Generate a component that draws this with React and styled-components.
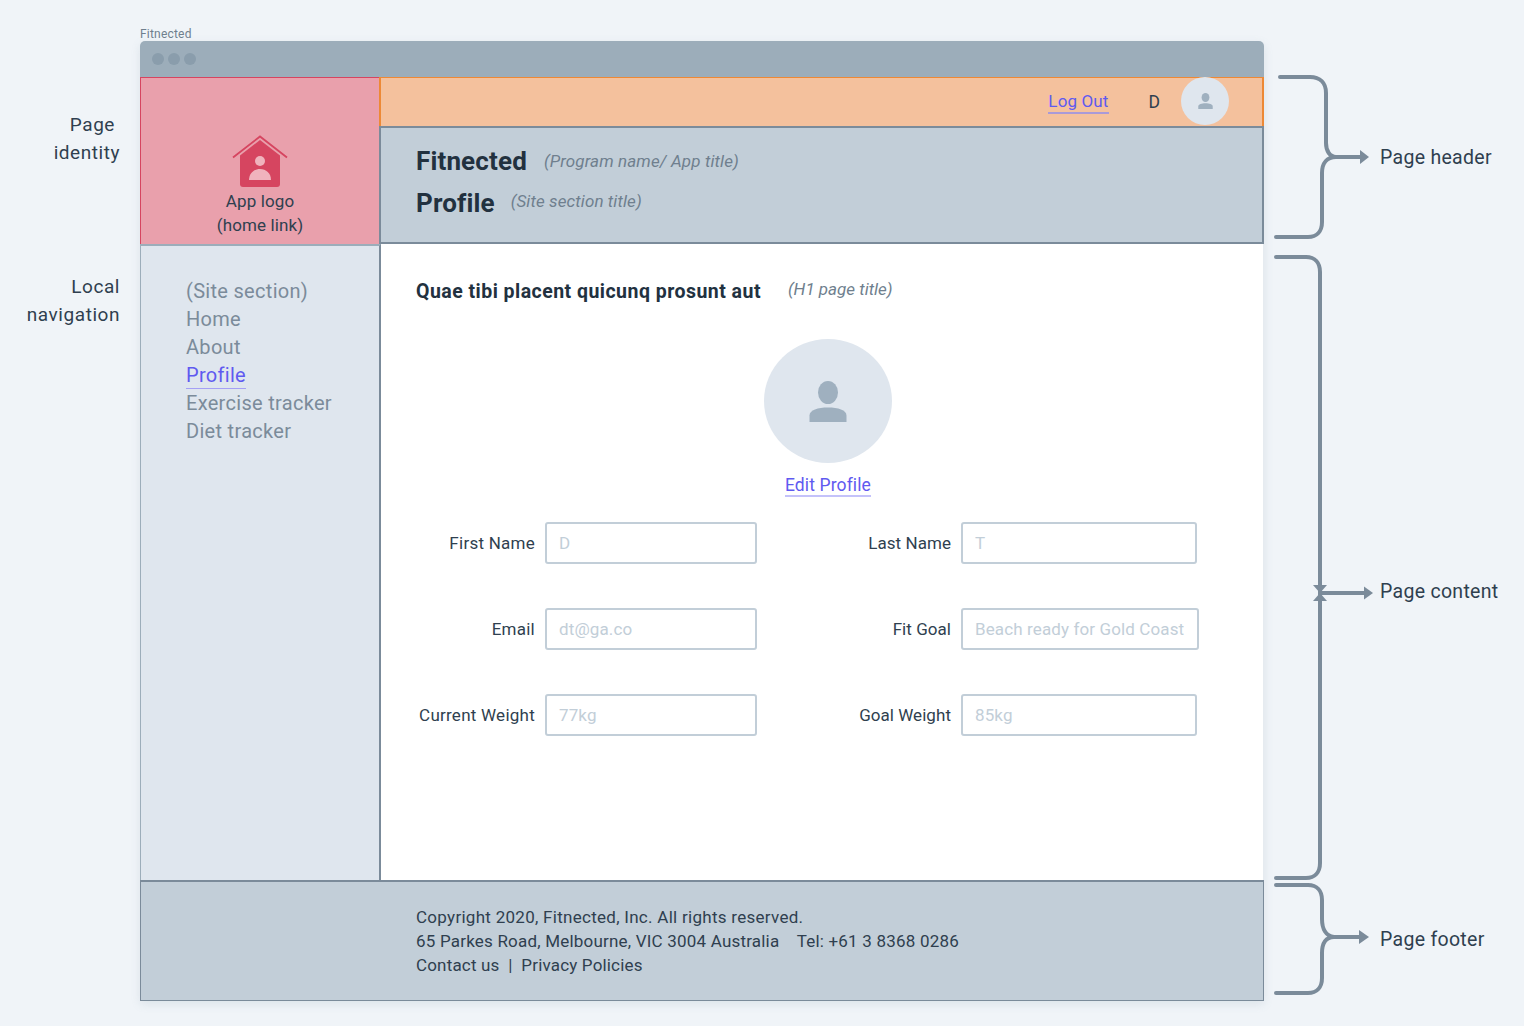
import React from "react";
import styled, { createGlobalStyle } from "styled-components";

const Global = createGlobalStyle`
  html, body { margin: 0; padding: 0; background: #f0f4f8; }
  body { font-family: Roboto, "Liberation Sans", sans-serif; color: #2f3f4f; overflow: hidden; }
  * { box-sizing: border-box; }
`;

const Page = styled.div`
  display: grid;
  grid-template-columns: 140px 1124px 1fr;
  grid-template-rows: 14px 960px;
  width: 1524px;
  height: 1026px;
  padding-top: 27px;
  background: #f0f4f8;
`;
const Caption = styled.div`
  grid-column: 2;
  font-size: 12px;
  line-height: 14px;
  color: #6f7f8e;
  letter-spacing: 0.2px;
`;
const LeftNotes = styled.div`
  grid-column: 1;
  grid-row: 2;
  display: flex;
  flex-direction: column;
  gap: 106px;
  padding: 70px 20px 0 0;
`;
const Note = styled.div`
  font-size: 19px;
  line-height: 28px;
  letter-spacing: 0.55px;
  text-align: right;
  color: #2f3f4f;
  white-space: nowrap;
`;
const NoteIndent = styled.span`
  display: block;
  padding-right: 5px;
`;
const Window = styled.div`
  grid-column: 2;
  grid-row: 2;
  display: flex;
  flex-direction: column;
  border-radius: 5px 5px 0 0;
  overflow: hidden;
  box-shadow: 0 3px 10px rgba(120, 140, 160, 0.16);
`;
const TitleBar = styled.div`
  flex: 0 0 36px;
  display: flex;
  align-items: center;
  gap: 4px;
  padding: 0 0 0 12px;
  background: #9cadba;
`;
const Dot = styled.span`
  width: 12px;
  height: 12px;
  border-radius: 50%;
  background: #8a9dac;
`;
const HeaderRow = styled.div`
  flex: 0 0 167px;
  display: flex;
`;
const Identity = styled.a`
  flex: 0 0 239px;
  display: flex;
  flex-direction: column;
  align-items: center;
  padding-top: 57px;
  background: #e9a0ac;
  border-top: 1px solid #d64560;
  border-left: 1px solid #d64560;
  font-size: 17px;
  line-height: 24px;
  letter-spacing: 0.12px;
  color: #2f3f4f;
  text-align: center;
`;
const Logo = styled.svg`
  display: block;
  margin-bottom: 1px;
`;
const HeaderStack = styled.div`
  flex: 1;
  display: flex;
  flex-direction: column;
  min-width: 0;
`;
const TopBar = styled.div`
  flex: 0 0 49px;
  display: flex;
  align-items: center;
  justify-content: flex-end;
  padding-right: 33px;
  background: #f4c19d;
  border-top: 1px solid #ed8936;
  border-left: 2px solid #ed8936;
  border-right: 2px solid #ed8936;
`;
const TopLink = styled.a`
  font-size: 17px;
  line-height: 22px;
  letter-spacing: 0.13px;
  color: #5f5af0;
  border-bottom: 2px solid #a99ad8;
  margin-right: 40px;
`;
const UserInitial = styled.span`
  font-size: 17.5px;
  color: #2f3f4f;
  margin-right: 21px;
`;
const AvatarSmall = styled.div`
  width: 48px;
  height: 48px;
  margin-top: -2px;
  border-radius: 50%;
  background: #dfe6ee;
  display: flex;
  align-items: center;
  justify-content: center;
`;
const TitlePanel = styled.div`
  flex: 1;
  display: flex;
  flex-direction: column;
  gap: 12px;
  padding: 18px 0 0 35px;
  background: #c2ced8;
  border: 2px solid #7b8b9a;
`;
const TitleLine = styled.div`
  display: flex;
  align-items: center;
  gap: ${(p) => p.$gap}px;
  height: 30px;
`;
const AppTitle = styled.span`
  font-size: 26px;
  line-height: 30px;
  font-weight: 700;
  letter-spacing: 0.15px;
  color: #22313f;
`;
const Hint = styled.span`
  font-size: 17px;
  line-height: 20px;
  font-style: italic;
  letter-spacing: ${(p) => p.$spacing}px;
  margin-bottom: ${(p) => p.$lift}px;
  color: #6f7f8e;
  white-space: nowrap;
`;
const MiddleRow = styled.div`
  flex: 1;
  display: flex;
  min-height: 0;
`;
const Sidebar = styled.nav`
  flex: 0 0 241px;
  display: flex;
  flex-direction: column;
  align-items: flex-start;
  padding: 31px 0 0 45px;
  background: #dfe6ee;
  border-top: 2px solid #9cadba;
  border-left: 1px solid #9cadba;
  border-right: 2px solid #7b8b9a;
`;
const NavItem = styled.a`
  font-size: 20px;
  line-height: 28px;
  letter-spacing: 0.3px;
  color: #7b8b9a;
  white-space: nowrap;
`;
const NavActive = styled(NavItem)`
  color: #5f5af0;
  position: relative;
  &::after {
    content: "";
    position: absolute;
    left: 0;
    right: 0;
    bottom: 0;
    height: 1px;
    background: #a5a0f5;
  }
`;
const Main = styled.main`
  flex: 1;
  background: #fff;
  padding: 33px 0 0 35px;
  border-right: 1px solid #e6ebf0;
`;
const HeadingLine = styled.div`
  display: flex;
  align-items: center;
  gap: 27px;
`;
const Heading = styled.h1`
  margin: 0;
  font-size: 19.5px;
  line-height: 30px;
  font-weight: 700;
  letter-spacing: 0.47px;
  color: #22313f;
  white-space: nowrap;
`;
const ProfileBlock = styled.div`
  display: flex;
  flex-direction: column;
  align-items: center;
  width: 824px;
  margin-top: 32px;
`;
const AvatarLarge = styled.div`
  width: 128px;
  height: 124px;
  border-radius: 50%;
  background: #dfe6ee;
  display: flex;
  align-items: center;
  justify-content: center;
`;
const EditLink = styled.a`
  margin-top: 12px;
  font-size: 17.5px;
  line-height: 20px;
  letter-spacing: 0.12px;
  color: #5f5af0;
  border-bottom: 2px solid #c4c2fa;
`;
const Form = styled.div`
  display: grid;
  grid-template-columns: 345px 1fr;
  row-gap: 44px;
  margin: 25px 0 0 0;
  width: 824px;
`;
const Field = styled.div`
  display: flex;
  align-items: center;
  gap: 10px;
`;
const FieldLabel = styled.label`
  flex: 0 0 ${(p) => p.$width}px;
  text-align: right;
  font-size: 17px;
  letter-spacing: ${(p) => p.$spacing}px;
  color: #2f3f4f;
  white-space: nowrap;
`;
const FieldBox = styled.div`
  flex: 0 0 ${(p) => p.$width}px;
  height: 42px;
  display: flex;
  align-items: center;
  padding: 0 12px;
  border: 2px solid #c2ced8;
  border-radius: 3px;
  background: #fff;
  font-size: 17px;
  letter-spacing: 0.12px;
  color: #c2ced8;
  white-space: nowrap;
`;
const Footer = styled.footer`
  flex: 0 0 121px;
  padding: 23px 0 0 275px;
  background: #c2ced8;
  border: 1px solid #7b8b9a;
  border-top-width: 2px;
`;
const FooterLine = styled.div`
  font-size: 17px;
  line-height: 24px;
  letter-spacing: ${(p) => p.$spacing}px;
  color: #2f3f4f;
  white-space: pre;
`;
const RightNotes = styled.div`
  grid-column: 3;
  grid-row: 2;
  display: flex;
  flex-direction: column;
  padding-top: 32px;
`;
const BracketRow = styled.div`
  display: flex;
  height: ${(p) => p.$height}px;
`;
const BracketSvg = styled.svg`
  flex: 0 0 116px;
  display: block;
  overflow: visible;
`;
const BracketLabel = styled.div`
  margin-top: ${(p) => p.$top}px;
  font-size: 19.5px;
  line-height: 28px;
  letter-spacing: 0.3px;
  color: #2f3f4f;
  white-space: nowrap;
`;

const Person = ({ width, height }) => (
  <svg width={width} height={height} viewBox="0 0 38 41" aria-hidden="true">
    <ellipse cx="19" cy="11.5" rx="10" ry="11.5" fill="#9fb0bf" />
    <path d="M0.5 41V34.5C0.5 29 9 26.5 19 26.5S37.5 29 37.5 34.5V41Z" fill="#9fb0bf" />
  </svg>
);

const stroke = { fill: "none", stroke: "#7b8b9a", strokeWidth: 4, strokeLinecap: "round" };

const Header = () => (
  <BracketSvg height="170" viewBox="0 0 116 170">
    <path {...stroke} d="M16 4H46C56 4 62 10 62 20V70C62 78 66 84 72 84" />
    <path {...stroke} d="M12 164H44C53 164 58 158 58 149V100C58 90 63 84 72 84H98" />
    <path d="M96 77L105 84L96 91Z" fill="#7b8b9a" />
  </BracketSvg>
);
const Content = () => (
  <BracketSvg height="630" viewBox="0 0 116 630">
    <path {...stroke} d="M12 4H42C51 4 56 10 56 19V610C56 619 51 625 42 625H12" />
    <path {...stroke} d="M56 340H100" />
    <path d="M100 333.5L109 340L100 346.5Z" fill="#7b8b9a" />
    <path d="M49 332H63L56 340L63 348H49L56 340Z" fill="#7b8b9a" />
  </BracketSvg>
);
const Foot = () => (
  <BracketSvg height="116" viewBox="0 0 116 116">
    <path {...stroke} d="M12 4H44C53 4 58 10 58 19V38C58 48 62 55 70 56" />
    <path {...stroke} d="M12 112H44C53 112 58 106 58 97V72C58 62 62 56 70 56H97" />
    <path d="M95 49L105 56L95 63Z" fill="#7b8b9a" />
  </BracketSvg>
);

const fields = [
  [["First Name", "D", 212], ["Last Name", "T", 236]],
  [["Email", "dt@ga.co", 212], ["Fit Goal", "Beach ready for Gold Coast", 238]],
  [["Current Weight", "77kg", 212], ["Goal Weight", "85kg", 236]],
];

export default function App() {
  return (
    <Page>
      <Global />
      <Caption>Fitnected</Caption>
      <LeftNotes>
        <Note>
          <NoteIndent>Page</NoteIndent>
          identity
        </Note>
        <Note>
          Local
          <br />
          navigation
        </Note>
      </LeftNotes>
      <Window>
        <TitleBar>
          <Dot />
          <Dot />
          <Dot />
        </TitleBar>
        <HeaderRow>
          <Identity>
            <Logo width="56" height="53" viewBox="0 0 56 53" aria-hidden="true">
              <path d="M1 22.5L28 1.5L55 22.5" fill="none" stroke="#d64560" strokeWidth="1.8" />
              <path d="M8 20.5L28 5L48 20.5V49C48 51 47 52 45 52H11C9 52 8 51 8 49Z" fill="#d64560" />
              <circle cx="28" cy="26" r="5" fill="#f0b3bd" />
              <path d="M17 45C17 38 22 34 28 34S39 38 39 45Z" fill="#f0b3bd" />
            </Logo>
            App logo
            <br />
            (home link)
          </Identity>
          <HeaderStack>
            <TopBar>
              <TopLink>Log Out</TopLink>
              <UserInitial>D</UserInitial>
              <AvatarSmall>
                <Person width={15} height={16} />
              </AvatarSmall>
            </TopBar>
            <TitlePanel>
              <TitleLine $gap={17}>
                <AppTitle>Fitnected</AppTitle>
                <Hint $spacing={0.12} $lift={1}>(Program name/ App title)</Hint>
              </TitleLine>
              <TitleLine $gap={16}>
                <AppTitle>Profile</AppTitle>
                <Hint $spacing={0.1} $lift={4}>(Site section title)</Hint>
              </TitleLine>
            </TitlePanel>
          </HeaderStack>
        </HeaderRow>
        <MiddleRow>
          <Sidebar>
            <NavItem>(Site section)</NavItem>
            <NavItem>Home</NavItem>
            <NavItem>About</NavItem>
            <NavActive>Profile</NavActive>
            <NavItem>Exercise tracker</NavItem>
            <NavItem>Diet tracker</NavItem>
          </Sidebar>
          <Main>
            <HeadingLine>
              <Heading>Quae tibi placent quicunq prosunt aut</Heading>
              <Hint $spacing={0} $lift={7}>(H1 page title)</Hint>
            </HeadingLine>
            <ProfileBlock>
              <AvatarLarge>
                <Person width={38} height={41} />
              </AvatarLarge>
              <EditLink>Edit Profile</EditLink>
            </ProfileBlock>
            <Form>
              {fields.flat().map(([label, value, width], i) => (
                <Field key={label}>
                  <FieldLabel $width={i % 2 === 1 ? 190 : 119} $spacing={i % 2 === 1 ? 0.05 : 0.25}>
                    {label}
                  </FieldLabel>
                  <FieldBox $width={width}>{value}</FieldBox>
                </Field>
              ))}
            </Form>
          </Main>
        </MiddleRow>
        <Footer>
          <FooterLine $spacing={0.28}>Copyright 2020, Fitnected, Inc. All rights reserved.</FooterLine>
          <FooterLine $spacing={0.2}>{"65 Parkes Road, Melbourne, VIC 3004 Australia    Tel: +61 3 8368 0286"}</FooterLine>
          <FooterLine $spacing={0.17}>{"Contact us  |  Privacy Policies"}</FooterLine>
        </Footer>
      </Window>
      <RightNotes>
        <BracketRow $height={180}>
          <Header />
          <BracketLabel $top={71}>Page header</BracketLabel>
        </BracketRow>
        <BracketRow $height={628}>
          <Content />
          <BracketLabel $top={325}>Page content</BracketLabel>
        </BracketRow>
        <BracketRow $height={116}>
          <Foot />
          <BracketLabel $top={45}>Page footer</BracketLabel>
        </BracketRow>
      </RightNotes>
    </Page>
  );
}
